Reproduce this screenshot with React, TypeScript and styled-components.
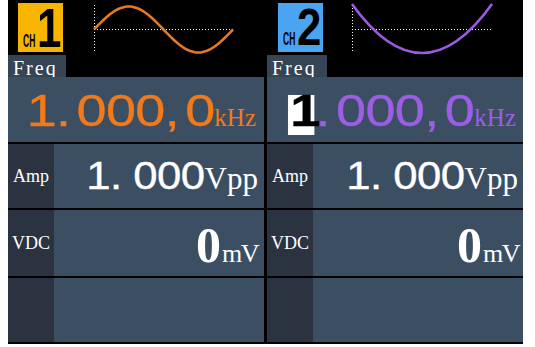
import React from "react";
import styled, { createGlobalStyle } from "styled-components";

const Global = createGlobalStyle`
  html, body { margin: 0; padding: 0; background: #ffffff; }
  body { font-family: "Liberation Sans", Arial, sans-serif; }
`;

const Screen = styled.div`
  margin-left: 8px;
  width: 515px;
  height: 344px;
  background: #000;
  display: grid;
  grid-template-columns: 256px 256px;
  column-gap: 3px;
`;

const Channel = styled.section`
  display: flex;
  flex-direction: column;
  height: 342px;
`;

const Header = styled.div`
  height: 77px;
  display: flex;
  flex-direction: column;
`;

const TopRow = styled.div<{ $pl: number }>`
  height: 55px;
  display: flex;
  align-items: flex-start;
  padding-left: ${(p) => p.$pl}px;
  padding-top: 3px;
  box-sizing: border-box;
`;

const Badge = styled.div<{ $bg: string }>`
  width: 45px;
  height: 49px;
  background: ${(p) => p.$bg};
  display: flex;
  align-items: baseline;
  padding: 11px 0 0 5px;
  box-sizing: border-box;
  color: #000;
  font-family: "Liberation Sans", Arial, sans-serif;
  font-weight: 700;
`;

const ChTag = styled.span`
  display: inline-block;
  font-size: 8.5px;
  line-height: 6px;
  white-space: nowrap;
  transform: scaleY(2.1);
  transform-origin: 0 100%;
`;

const ChNum = styled.span<{ $size: number; $lh: number; $sx: number; $sy: number; $ml: number }>`
  display: inline-block;
  font-size: ${(p) => p.$size}px;
  line-height: ${(p) => p.$lh}px;
  margin-left: ${(p) => p.$ml}px;
  transform: scale(${(p) => p.$sx}, ${(p) => p.$sy});
  transform-origin: 0 ${(p) => (p.$size * 0.905 - (p.$size * 1.117 - p.$lh) / 2).toFixed(1)}px;
`;

const Wave = styled.svg<{ $ml: number }>`
  display: block;
  margin-left: ${(p) => p.$ml}px;
  margin-top: -3px;
  overflow: visible;
`;

const TabRow = styled.div`
  height: 22px;
  display: flex;
`;

const Tab = styled.div<{ $w: number }>`
  width: ${(p) => p.$w}px;
  background: #354556;
  color: #fff;
  font-family: "Liberation Serif", "Times New Roman", serif;
  font-size: 20px;
  letter-spacing: 2px;
  line-height: 26px;
  padding-left: 5px;
  box-sizing: border-box;
  white-space: nowrap;
`;

const Rows = styled.div`
  display: flex;
  flex-direction: column;
  gap: 2px;
`;

const Row = styled.div<{ $h: number }>`
  height: ${(p) => p.$h}px;
  display: flex;
  background: #3b4e62;
`;

const Label = styled.div`
  width: 46px;
  flex: none;
  background: #2b3341;
  color: #fff;
  display: flex;
  align-items: center;
  justify-content: center;
  font-family: "Liberation Serif", "Times New Roman", serif;
  font-size: 18px;
`;

const Value = styled.div<{ $pt: number; $pr: number }>`
  flex: 1;
  display: flex;
  justify-content: flex-end;
  align-items: flex-start;
  padding-top: ${(p) => p.$pt}px;
  padding-right: ${(p) => p.$pr}px;
`;

const Reading = styled.div<{ $color: string }>`
  display: flex;
  align-items: baseline;
  line-height: 1;
  color: ${(p) => p.$color};
  white-space: pre;
`;

const Digits = styled.span<{ $size: number; $ls: number; $ws: number; $sx: number }>`
  display: inline-block;
  font-family: "Liberation Sans", Arial, sans-serif;
  font-size: ${(p) => p.$size}px;
  letter-spacing: ${(p) => p.$ls}px;
  word-spacing: ${(p) => p.$ws}px;
  -webkit-text-stroke: 0.35px currentColor;
  transform: scaleX(${(p) => p.$sx});
  transform-origin: 100% 50%;
`;

const BoldDigit = styled.span<{ $size: number }>`
  font-family: "Liberation Serif", "Times New Roman", serif;
  font-weight: 700;
  font-size: ${(p) => p.$size}px;
`;

const Cursor = styled.span`
  display: inline-block;
  background: #fff;
  color: #000;
  font-weight: 700;
  line-height: 32px;
  padding: 0 0 8px 2px;
  width: 20px;
  letter-spacing: -5px;
  text-align: left;
  margin-right: 1px;
`;

const Unit = styled.span<{ $size: number; $ml: number; $ls?: number }>`
  font-family: "Liberation Serif", "Times New Roman", serif;
  font-size: ${(p) => p.$size}px;
  margin-left: ${(p) => p.$ml}px;
  letter-spacing: ${(p) => p.$ls ?? 0}px;
`;

function sinePath(w: number, cy: number, a: number) {
  const n = 80;
  let d = "";
  for (let i = 0; i <= n; i++) {
    const x = (i / n) * w;
    const y = cy - a * Math.sin((2 * Math.PI * i) / n);
    d += `${i ? "L" : "M"}${x.toFixed(2)},${y.toFixed(2)}`;
  }
  return d;
}

const Grid: React.FC = () => (
  <>
    <line x1={0.5} y1={5} x2={0.5} y2={52} stroke="#fff" strokeWidth={1} strokeDasharray="1 2" />
    <line x1={0} y1={29.5} x2={140} y2={29.5} stroke="#fff" strokeWidth={1} strokeDasharray="1 2" />
  </>
);

export default function App() {
  const orange = "#f07a1c";
  const purple = "#9d5ee6";
  return (
    <>
      <Global />
      <Screen>
        <Channel>
          <Header>
            <TopRow $pl={10}>
              <Badge $bg="#f7b500">
                <ChTag>CH</ChTag>
                <ChNum $size={40} $lh={38} $sx={1.1} $sy={1.4} $ml={2}>1</ChNum>
              </Badge>
              <Wave $ml={31} width={142} height={58} viewBox="0 0 142 58">
                <Grid />
                <path d={sinePath(139, 29.5, 23)} fill="none" stroke="#e8791f" strokeWidth={2.6} />
              </Wave>
            </TopRow>
            <TabRow>
              <Tab $w={58}>Freq</Tab>
            </TabRow>
          </Header>
          <Rows>
            <Row $h={65}>
              <Value $pt={11} $pr={8}>
                <Reading $color={orange}>
                  <Digits $size={45} $ls={-0.5} $ws={-7} $sx={1.2}>1. 000, 0</Digits>
                  <Unit $size={25} $ml={0}>kHz</Unit>
                </Reading>
              </Value>
            </Row>
            <Row $h={64}>
              <Label>Amp</Label>
              <Value $pt={12} $pr={6}>
                <Reading $color="#fff">
                  <Digits $size={39} $ls={-0.5} $ws={0} $sx={1.12}>1. 000</Digits>
                  <Unit $size={31} $ml={0}>Vpp</Unit>
                </Reading>
              </Value>
            </Row>
            <Row $h={66}>
              <Label>VDC</Label>
              <Value $pt={10} $pr={6}>
                <Reading $color="#fff">
                  <BoldDigit $size={50}>0</BoldDigit>
                  <Unit $size={26} $ml={1} $ls={-1.5}>mV</Unit>
                </Reading>
              </Value>
            </Row>
            <Row $h={64}>
              <Label />
              <Value $pt={0} $pr={0} />
            </Row>
          </Rows>
        </Channel>

        <Channel>
          <Header>
            <TopRow $pl={11}>
              <Badge $bg="#4aa4f0">
                <ChTag>CH</ChTag>
                <ChNum $size={38} $lh={36} $sx={1.15} $sy={1.36} $ml={2}>2</ChNum>
              </Badge>
              <Wave $ml={29} width={142} height={58} viewBox="0 0 142 58">
                <Grid />
                <path d="M0,4 Q70,102 140,4" fill="none" stroke="#9c5ae6" strokeWidth={2.6} />
              </Wave>
            </TopRow>
            <TabRow>
              <Tab $w={60}>Freq</Tab>
            </TabRow>
          </Header>
          <Rows>
            <Row $h={65}>
              <Value $pt={11} $pr={7}>
                <Reading $color={purple}>
                  <Digits $size={45} $ls={-0.5} $ws={-7} $sx={1.2}>
                    <Cursor>1</Cursor>. 000, 0
                  </Digits>
                  <Unit $size={25} $ml={0}>kHz</Unit>
                </Reading>
              </Value>
            </Row>
            <Row $h={64}>
              <Label>Amp</Label>
              <Value $pt={12} $pr={5}>
                <Reading $color="#fff">
                  <Digits $size={39} $ls={-0.5} $ws={0} $sx={1.12}>1. 000</Digits>
                  <Unit $size={31} $ml={0}>Vpp</Unit>
                </Reading>
              </Value>
            </Row>
            <Row $h={66}>
              <Label>VDC</Label>
              <Value $pt={10} $pr={4}>
                <Reading $color="#fff">
                  <BoldDigit $size={50}>0</BoldDigit>
                  <Unit $size={26} $ml={1} $ls={-1.5}>mV</Unit>
                </Reading>
              </Value>
            </Row>
            <Row $h={64}>
              <Label />
              <Value $pt={0} $pr={0} />
            </Row>
          </Rows>
        </Channel>
      </Screen>
    </>
  );
}
